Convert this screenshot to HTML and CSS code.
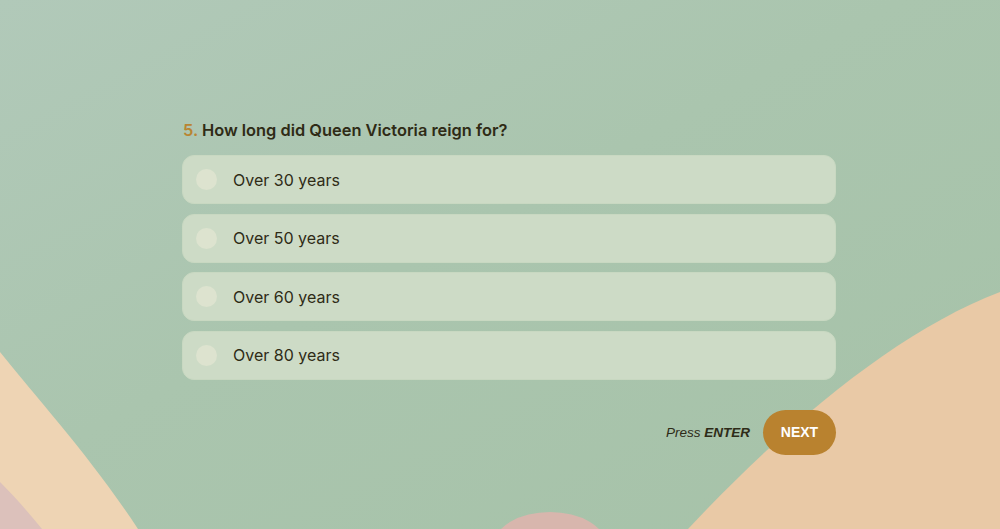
FILE: index.html
```html
<!DOCTYPE html>
<html lang="en">
<head>
<meta charset="utf-8">
<title>Quiz</title>
<link rel="stylesheet" href="styles.css">
</head>
<body>
<svg class="bg" viewBox="0 0 1000 529" preserveAspectRatio="none" aria-hidden="true">
  <defs>
    <linearGradient id="g" x1="0" y1="0" x2="1" y2="1">
      <stop offset="0" stop-color="#b1c9b9"/>
      <stop offset="0.45" stop-color="#aac5ae"/>
      <stop offset="1" stop-color="#a6c2a8"/>
    </linearGradient>
  </defs>
  <rect width="1000" height="529" fill="url(#g)"/>
  <path d="M0 352 C 40 402, 90 456, 138 529 L 0 529 Z" fill="#eed4b4"/>
  <path d="M0 482 C 15 497, 28 512, 42 529 L 0 529 Z" fill="#dcc1bb"/>
  <path d="M1000 292 C 900 330, 790 420, 688 529 L 1000 529 Z" fill="#e9c9a6"/>
  <ellipse cx="550" cy="545" rx="56" ry="33" fill="#d8b6ad"/>
</svg>
<main class="quiz">
  <h2 class="question"><span class="num">5.</span> How long did Queen Victoria reign for?</h2>
  <ul class="options">
    <li class="option"><span class="radio"></span><span class="label">Over 30 years</span></li>
    <li class="option"><span class="radio"></span><span class="label">Over 50 years</span></li>
    <li class="option"><span class="radio"></span><span class="label">Over 60 years</span></li>
    <li class="option"><span class="radio"></span><span class="label">Over 80 years</span></li>
  </ul>
  <div class="actions">
    <span class="hint">Press <b>ENTER</b></span>
    <button class="next" type="button">NEXT</button>
  </div>
</main>
</body>
</html>
```

FILE: styles.css
```css
html, body {
  margin: 0;
  padding: 0;
  height: 100%;
  overflow: hidden;
}
body {
  font-family: Inter, "Noto Sans", sans-serif;
  color: #2f2b16;
  background: #a8c4ab;
  position: relative;
}
.bg {
  position: absolute;
  inset: 0;
  width: 100%;
  height: 100%;
  z-index: 0;
}
.quiz {
  position: relative;
  z-index: 1;
  width: 654px;
  margin: 0 0 0 182px;
  padding-top: 120px;
}
.question {
  margin: 0 0 15px 1px;
  font-size: 16.4px;
  font-weight: 600;
  line-height: 20px;
  color: #2f2b16;
}
.num {
  color: #b98532;
}
.options {
  list-style: none;
  margin: 0;
  padding: 0;
  display: flex;
  flex-direction: column;
  gap: 9.67px;
}
.option {
  display: flex;
  align-items: center;
  height: 49px;
  box-sizing: border-box;
  padding-left: 13px;
  background: #cddbc6;
  border: 1px solid #c8d8c1;
  border-radius: 12px;
}
.radio {
  width: 21px;
  height: 21px;
  border-radius: 50%;
  background: #dde3cf;
  margin-right: 16px;
}
.label {
  font-size: 16px;
  color: #2f2b16;
}
.actions {
  display: flex;
  justify-content: flex-end;
  align-items: center;
  gap: 13px;
  margin-top: 30px;
}
.hint {
  font-family: "Liberation Sans", Arial, sans-serif;
  font-style: italic;
  font-size: 13.5px;
  color: #2e2b18;
}
.hint b {
  font-weight: 700;
}
.next {
  width: 73px;
  height: 45px;
  border: none;
  border-radius: 23px;
  background: #b9822f;
  color: #fff;
  font-family: "Liberation Sans", Arial, sans-serif;
  font-weight: 700;
  font-size: 14px;
  padding: 0;
}
```
